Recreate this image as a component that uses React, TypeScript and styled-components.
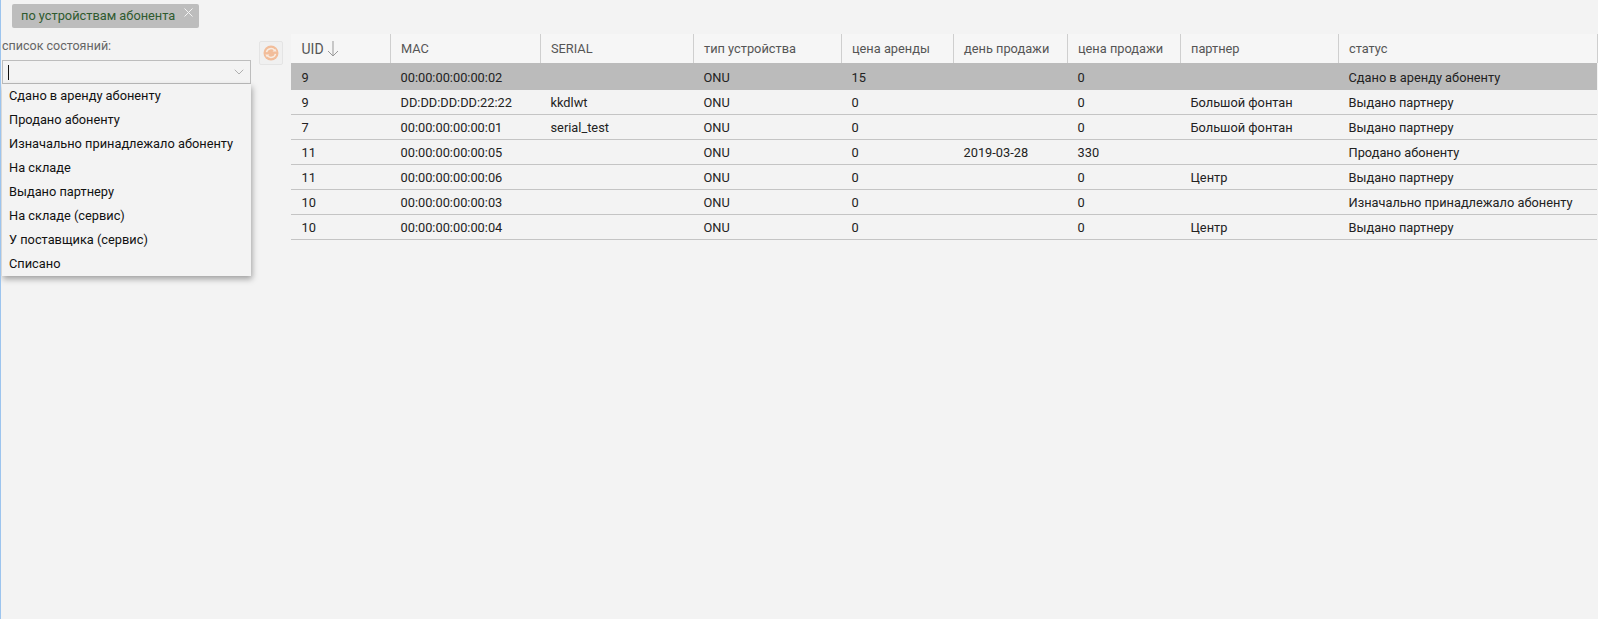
import React from "react";
import styled, { createGlobalStyle } from "styled-components";
import { ChevronDown } from "lucide-react";

const Global = createGlobalStyle`
  html, body {
    margin: 0;
    padding: 0;
    height: 100%;
    background: #f3f3f3;
  }
  body {
    font-family: Roboto, "Liberation Sans", sans-serif;
    font-size: 12.8px;
    color: #333;
  }
`;

const Page = styled.div`
  height: 619px;
  overflow: hidden;
  box-sizing: border-box;
  border-left: 1px solid #9cc4ee;
  background: #f3f3f3;
`;

const TagBar = styled.div`
  height: 34px;
  padding: 4px 0 0 11px;
  box-sizing: border-box;
`;

const Tag = styled.div`
  display: inline-flex;
  align-items: flex-start;
  height: 24px;
  width: 187px;
  box-sizing: border-box;
  padding: 0 0 0 9px;
  background: #bdbdbd;
  border-radius: 2px;
  color: #2f5a2f;
  line-height: 24px;
`;

const TagClose = styled.svg`
  width: 9px;
  height: 9px;
  margin: 4px 0 0 9px;
  stroke: #f4f4f4;
  stroke-width: 1;
  fill: none;
`;

const Main = styled.div`
  display: flex;
  align-items: flex-start;
`;

const Side = styled.div`
  width: 249px;
  margin-left: 1px;
  flex: none;
`;

const FieldLabel = styled.div`
  height: 26px;
  line-height: 24px;
  font-size: 12.5px;
  color: #666;
`;

const Select = styled.div`
  height: 24px;
  box-sizing: border-box;
  border: 1px solid #bdbdbd;
  display: flex;
  align-items: center;
  justify-content: space-between;
  padding: 0 3px 0 5px;
`;

const Caret = styled.div`
  width: 1px;
  height: 15px;
  background: #111;
`;

const Chevron = styled(ChevronDown)`
  width: 16px;
  height: 16px;
  color: #aaa;
  stroke-width: 1.4;
`;

const Menu = styled.ul`
  list-style: none;
  margin: 0;
  padding: 0;
  height: 192px;
  background: #f3f3f3;
  box-shadow: 1px 3px 6px rgba(0, 0, 0, 0.35);
`;

const MenuItem = styled.li`
  height: 24px;
  line-height: 24px;
  padding-left: 7px;
  color: #111;
  white-space: nowrap;
`;

const RefreshButton = styled.div`
  width: 24px;
  height: 24px;
  flex: none;
  margin: 7px 0 0 8px;
  box-sizing: border-box;
  border: 1px solid #e4e4e4;
  border-radius: 2px;
  background: #f0f0f0;
  display: flex;
  align-items: center;
  justify-content: center;
`;

const Table = styled.table`
  margin-left: 8px;
  width: 1306px;
  flex: none;
  table-layout: fixed;
  border-collapse: collapse;
`;

const HeadCell = styled.th`
  height: 29px;
  padding: 0 0 0 10.5px;
  box-sizing: border-box;
  background: #f6f6f6;
  border-right: 1px solid #cfcfcf;
  text-align: left;
  font-weight: 400;
  color: #555;
  white-space: nowrap;
`;

const UidLabel = styled.span`
  font-size: 14px;
`;

const SortArrow = styled.svg`
  width: 12px;
  height: 16px;
  margin-left: 3px;
  vertical-align: -3px;
  stroke: #999;
  fill: none;
`;

const Row = styled.tr<{ $selected?: boolean }>`
  background: ${(p) => (p.$selected ? "#bbbbbb" : "transparent")};
  border-bottom: ${(p) => (p.$selected ? "none" : "1px solid #c4c4c4")};
  color: #222;
`;

const Cell = styled.td<{ $tall?: boolean }>`
  height: ${(p) => (p.$tall ? "25px" : "24px")};
  padding: ${(p) => (p.$tall ? "2px" : "0")} 0 0 10.5px;
  white-space: nowrap;
`;

const columns = [
  { title: "UID", width: 99 },
  { title: "MAC", width: 150 },
  { title: "SERIAL", width: 153 },
  { title: "тип устройства", width: 148 },
  { title: "цена аренды", width: 112 },
  { title: "день продажи", width: 114 },
  { title: "цена продажи", width: 113 },
  { title: "партнер", width: 158 },
  { title: "статус", width: 259 },
];

const rows = [
  ["9", "00:00:00:00:00:02", "", "ONU", "15", "", "0", "", "Сдано в аренду абоненту"],
  ["9", "DD:DD:DD:DD:22:22", "kkdlwt", "ONU", "0", "", "0", "Большой фонтан", "Выдано партнеру"],
  ["7", "00:00:00:00:00:01", "serial_test", "ONU", "0", "", "0", "Большой фонтан", "Выдано партнеру"],
  ["11", "00:00:00:00:00:05", "", "ONU", "0", "2019-03-28", "330", "", "Продано абоненту"],
  ["11", "00:00:00:00:00:06", "", "ONU", "0", "", "0", "Центр", "Выдано партнеру"],
  ["10", "00:00:00:00:00:03", "", "ONU", "0", "", "0", "", "Изначально принадлежало абоненту"],
  ["10", "00:00:00:00:00:04", "", "ONU", "0", "", "0", "Центр", "Выдано партнеру"],
];

const states = [
  "Сдано в аренду абоненту",
  "Продано абоненту",
  "Изначально принадлежало абоненту",
  "На складе",
  "Выдано партнеру",
  "На складе (сервис)",
  "У поставщика (сервис)",
  "Списано",
];

const RefreshIcon = () => (
  <svg width="16" height="16" viewBox="0 0 16 16">
    <circle cx="8" cy="8" r="7.5" fill="#f2bd9a" />
    <path d="M3.5 7.2A4.6 4.6 0 0 1 11.6 5.4" fill="none" stroke="#f8ece2" strokeWidth="1.5" />
    <path d="M12.5 8.8A4.6 4.6 0 0 1 4.4 10.6" fill="none" stroke="#f8ece2" strokeWidth="1.5" />
    <path d="M9.6 6.6h4l-1.4-2.8z" fill="#f8ece2" />
    <path d="M6.4 9.4h-4l1.4 2.8z" fill="#f8ece2" />
  </svg>
);

export default function App() {
  return (
    <Page>
      <Global />
      <TagBar>
        <Tag>
          по устройствам абонента
          <TagClose viewBox="0 0 9 9">
            <path d="M.5.5l8 8M8.5.5l-8 8" />
          </TagClose>
        </Tag>
      </TagBar>
      <Main>
        <Side>
          <FieldLabel>список состояний:</FieldLabel>
          <Select>
            <Caret />
            <Chevron />
          </Select>
          <Menu>
            {states.map((s) => (
              <MenuItem key={s}>{s}</MenuItem>
            ))}
          </Menu>
        </Side>
        <RefreshButton>
          <RefreshIcon />
        </RefreshButton>
        <Table>
          <colgroup>
            {columns.map((c) => (
              <col key={c.title} width={c.width} />
            ))}
          </colgroup>
          <thead>
            <tr>
              {columns.map((c, i) => (
                <HeadCell key={c.title}>
                  {i === 0 ? (
                    <>
                      <UidLabel>{c.title}</UidLabel>
                      <SortArrow viewBox="0 0 12 16">
                        <path d="M6 0v15M1 10l5 5 5-5" />
                      </SortArrow>
                    </>
                  ) : (
                    c.title
                  )}
                </HeadCell>
              ))}
            </tr>
          </thead>
          <tbody>
            {rows.map((r, i) => (
              <Row key={i} $selected={i === 0}>
                {r.map((v, j) => (
                  <Cell key={j} $tall={i === 0}>
                    {v}
                  </Cell>
                ))}
              </Row>
            ))}
          </tbody>
        </Table>
      </Main>
    </Page>
  );
}
